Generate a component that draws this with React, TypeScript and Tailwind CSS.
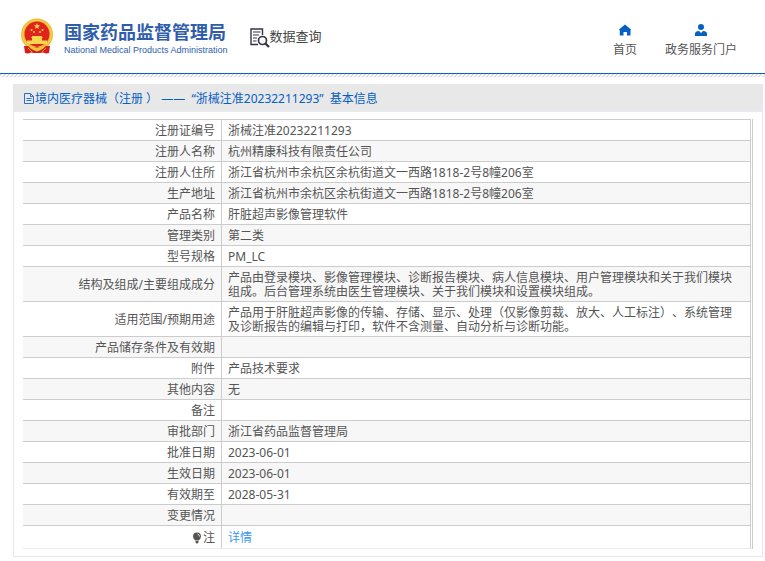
import { ReactNode } from "react";

interface InfoRow {
  label: ReactNode;
  value: ReactNode;
}

const rows: InfoRow[] = [
  { label: "注册证编号", value: "浙械注准20232211293" },
  { label: "注册人名称", value: "杭州精康科技有限责任公司" },
  { label: "注册人住所", value: "浙江省杭州市余杭区余杭街道文一西路1818-2号8幢206室" },
  { label: "生产地址", value: "浙江省杭州市余杭区余杭街道文一西路1818-2号8幢206室" },
  { label: "产品名称", value: "肝脏超声影像管理软件" },
  { label: "管理类别", value: "第二类" },
  { label: "型号规格", value: "PM_LC" },
  {
    label: "结构及组成/主要组成成分",
    value:
      "产品由登录模块、影像管理模块、诊断报告模块、病人信息模块、用户管理模块和关于我们模块组成。后台管理系统由医生管理模块、关于我们模块和设置模块组成。",
  },
  {
    label: "适用范围/预期用途",
    value:
      "产品用于肝脏超声影像的传输、存储、显示、处理（仅影像剪裁、放大、人工标注）、系统管理及诊断报告的编辑与打印，软件不含测量、自动分析与诊断功能。",
  },
  { label: "产品储存条件及有效期", value: "" },
  { label: "附件", value: "产品技术要求" },
  { label: "其他内容", value: "无" },
  { label: "备注", value: "" },
  { label: "审批部门", value: "浙江省药品监督管理局" },
  { label: "批准日期", value: "2023-06-01" },
  { label: "生效日期", value: "2023-06-01" },
  { label: "有效期至", value: "2028-05-31" },
  { label: "变更情况", value: "" },
];

function Emblem() {
  return (
    <svg width="34" height="36" viewBox="0 0 34 36" aria-hidden="true">
      <circle cx="17" cy="16.500" r="16" fill="#eebb33" />
      <circle cx="17" cy="16.500" r="14.300" fill="none" stroke="#f7d45c" strokeWidth="1" />
      <circle cx="17" cy="16" r="12.500" fill="#e0231c" />
      <path d="M17 5 L17.8 7.3 L20.2 7.3 L18.3 8.8 L19 11 L17 9.7 L15 11 L15.7 8.8 L13.8 7.3 L16.2 7.3 Z" fill="#f8d64e" />
      <circle cx="11.500" cy="12" r="1" fill="#f8d64e" />
      <circle cx="22.500" cy="12" r="1" fill="#f8d64e" />
      <circle cx="14" cy="14" r="0.900" fill="#f8d64e" />
      <circle cx="20" cy="14" r="0.900" fill="#f8d64e" />
      <path d="M12.500 18 H21.500 L23 20 H11 Z M12 20 H22 V23 H12 Z M7 22.500 H27 V26 H7 Z" fill="#f8d64e" />
      <path d="M4 28 L8 28 L13 31 L17 28 L21 31 L26 28 L30 28 L29 35 Q26 36 23 34.500 L20 35 H14 L11 34.500 Q8 36 5 35 Z" fill="#d3201c" />
      <path d="M9 28 Q13 28 14 29.500 H20 Q21 28 25 28 L24 30 Q20 33 17 33.500 Q14 33 10 30 Z" fill="#f1c23a" />
      <path d="M8 30 L12 34 M26 30 L22 34" stroke="#f1c23a" strokeWidth="0.800" />
    </svg>
  );
}

function SearchDocIcon() {
  return (
    <svg width="20" height="20" viewBox="0 0 20 20" fill="none" stroke="#333347" aria-hidden="true">
      <path d="M8 16.500 H1 V1 H12.500 V7" strokeWidth="1.400" />
      <path d="M3 4 H10.500 M3 7 H9 M3 10 H7 M3 13 H6.500" strokeWidth="1.200" />
      <circle cx="12.500" cy="12.500" r="4" strokeWidth="1.700" />
      <path d="M15.500 15.500 L19 19" strokeWidth="2.200" />
    </svg>
  );
}

function HomeIcon() {
  return (
    <svg width="12" height="12" viewBox="0 0 12 12" fill="#0560c4" aria-hidden="true">
      <path d="M6 0.500 L12 5.500 L11.500 6.500 V11.500 H8 V8 H4.500 V11.500 H0.800 V6.500 L0 5.500 Z" />
    </svg>
  );
}

function UserIcon() {
  return (
    <svg width="12" height="12" viewBox="0 0 12 12" fill="#0560c4" aria-hidden="true">
      <circle cx="6" cy="3" r="3" />
      <path d="M0 12 V10 Q0 7.500 3 7 H4 L6 9 L8 7 H9 Q12 7.500 12 10 V12 Z" />
    </svg>
  );
}

function DocIcon() {
  return (
    <svg width="10" height="12" viewBox="0 0 10 12" fill="none" stroke="#2a6fc9" aria-hidden="true">
      <path d="M0.500 0.500 H6.500 L9.500 3.500 V10.500 H0.500 Z M6.500 0.500 V3.500 H9.500 M2.500 5.500 H7.500 M2.500 7.500 H7.500" />
    </svg>
  );
}

function BulbIcon() {
  return (
    <svg width="10" height="12" viewBox="0 0 10 12" aria-hidden="true">
      <path d="M5 0.500 A4 4 0 0 1 9 4.500 Q9 6.500 6.500 8.500 H3.500 Q1 6.500 1 4.500 A4 4 0 0 1 5 0.500 Z M3.500 9 H6.500 V10.500 L5.500 11.500 H4.500 L3.500 10.500 Z" fill="#555" />
      <path d="M5.500 2 Q7.500 2.500 7.500 4.500" fill="none" stroke="#ddd" />
    </svg>
  );
}

function Header() {
  return (
    <header>
      <div className="box-content flex h-[73px] items-start justify-between border-b border-[#0560c4]">
        <div className="flex">
          <a href="#" className="ml-5 mt-[18px] flex items-start gap-[10px]">
            <Emblem />
            <span className="flex flex-col pt-[2px] text-[#2f5dab]">
              <span className="text-[18px] leading-6 font-bold">国家药品监督管理局</span>
              <span className="font-['Liberation_Sans',sans-serif] text-[9px] leading-3 whitespace-nowrap">
                National Medical Products Administration
              </span>
            </span>
          </a>
          <a href="#" className="ml-[22px] mt-[26px] flex items-start text-[13px] leading-5 text-[#444]">
            <span className="pt-[2px]">
              <SearchDocIcon />
            </span>
            数据查询
          </a>
        </div>
        <nav className="mr-7 mt-6 flex gap-7 text-[12px] leading-4 text-[#555]">
          <a href="#" className="flex flex-col items-center gap-[6px]">
            <HomeIcon />
            首页
          </a>
          <a href="#" className="flex flex-col items-center gap-[6px]">
            <UserIcon />
            政务服务门户
          </a>
        </nav>
      </div>
      <div className="h-[3px] bg-[linear-gradient(135deg,#e0e0e0_25%,#fff_25%,#fff_50%,#e0e0e0_50%,#e0e0e0_75%,#fff_75%)] bg-size-[4px_4px]" />
    </header>
  );
}

export default function App() {
  return (
    <div className="bg-white font-['Noto_Sans','Noto_Sans_CJK_SC',sans-serif] text-[12px] leading-[14px] text-[#555] [text-spacing-trim:space-all]">
      <Header />
      <main className="ml-[13px] mr-[2px] mt-[7px] border border-t-0 border-[#e8e8e8] pb-[7px]">
        <h1 className="flex h-7 items-center border-b border-[#e6eaf5] bg-[#e8e8e8] pl-[10px] pt-[2px] text-[#0560c4] whitespace-pre">
          <DocIcon />
          <span className="pl-px">{"境内医疗器械（注册 ） ——  “浙械注准20232211293”  基本信息"}</span>
        </h1>
        <div className="mx-[9px] mt-[7px] border-r border-[#ccc] pr-px">
          <table className="w-full table-fixed border-separate border-spacing-0 border-r border-b border-r-[#ccc] border-b-[#e6eaf5]">
            <colgroup>
              <col className="w-[199px]" />
              <col />
            </colgroup>
            <tbody>
              {rows.map((row, i) => (
                <tr key={i} className="even:bg-[#f7f7f7]">
                  <th className="border-t border-r border-[#ccc] pt-1 pr-[6px] pb-[2px] text-right font-normal">{row.label}</th>
                  <td className="border-t border-[#ccc] pt-1 pr-4 pb-[2px] pl-[6px]">{row.value || "\u00a0"}</td>
                </tr>
              ))}
              <tr>
                <th className="border-t border-r border-[#ccc] pt-[5px] pr-[6px] pb-[3px] text-right font-normal">
                  <span className="flex items-center justify-end gap-px">
                    <BulbIcon />
                    注
                  </span>
                </th>
                <td className="border-t border-[#ccc] pt-[5px] pb-[3px] pl-[6px]">
                  <a href="#" className="text-[#3c96f5]">
                    详情
                  </a>
                </td>
              </tr>
            </tbody>
          </table>
        </div>
      </main>
    </div>
  );
}
